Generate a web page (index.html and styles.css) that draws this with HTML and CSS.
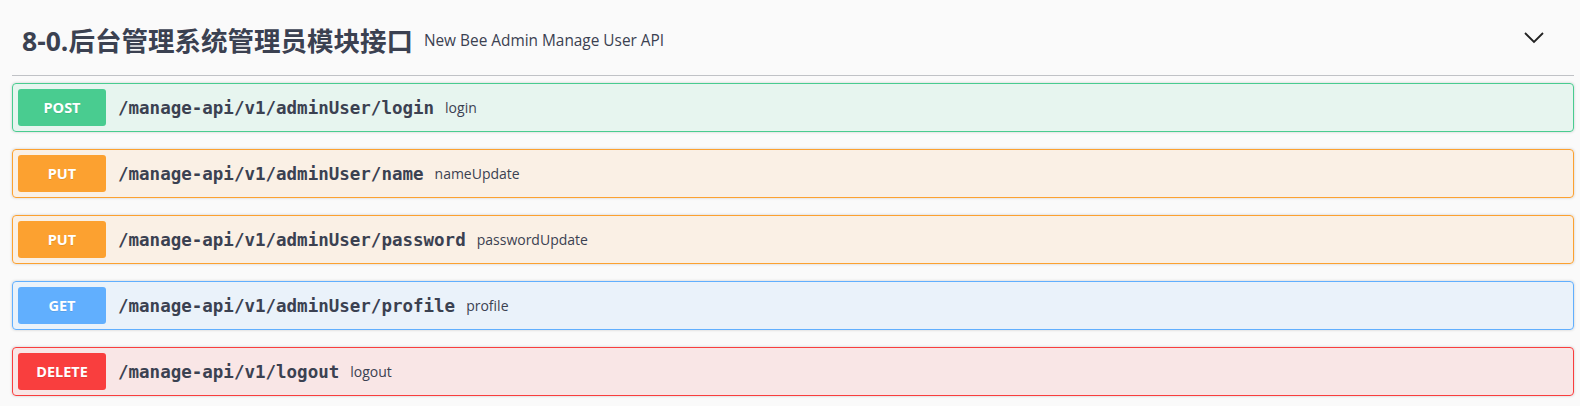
FILE: index.html
```html
<!DOCTYPE html>
<html lang="zh">
<head>
<meta charset="utf-8">
<title>Swagger</title>
<link rel="stylesheet" href="styles.css">
</head>
<body>
<div class="tag-section">
  <div class="tag-header">
    <h4 class="tag-title">8-0.后台管理系统管理员模块接口</h4>
    <span class="tag-desc">New Bee Admin Manage User API</span>
    <span class="spacer"></span>
    <svg class="chevron" width="20" height="12" viewBox="0 0 20 12"><path d="M1 1 L10 10 L19 1" fill="none" stroke="#222" stroke-width="1.8"/></svg>
  </div>
  <div class="ops">
    <div class="op op-post">
      <span class="method">POST</span>
      <span class="path">/manage-api/v1/adminUser/login</span>
      <span class="summary">login</span>
    </div>
    <div class="op op-put">
      <span class="method">PUT</span>
      <span class="path">/manage-api/v1/adminUser/name</span>
      <span class="summary">nameUpdate</span>
    </div>
    <div class="op op-put">
      <span class="method">PUT</span>
      <span class="path">/manage-api/v1/adminUser/password</span>
      <span class="summary">passwordUpdate</span>
    </div>
    <div class="op op-get">
      <span class="method">GET</span>
      <span class="path">/manage-api/v1/adminUser/profile</span>
      <span class="summary">profile</span>
    </div>
    <div class="op op-delete">
      <span class="method">DELETE</span>
      <span class="path">/manage-api/v1/logout</span>
      <span class="summary">logout</span>
    </div>
  </div>
</div>
</body>
</html>
```
FILE: styles.css
```css
html, body {
  margin: 0;
  padding: 0;
  background: #fafafa;
}
body {
  font-family: "Open Sans", "Noto Sans CJK SC", sans-serif;
  color: #3b4151;
}
.tag-section {
  padding: 0 6px 0 12px;
}
.tag-header {
  display: flex;
  align-items: center;
  height: 70px;
  padding-top: 5px;
  padding-left: 10px;
  padding-right: 30px;
  border-bottom: 1px solid rgba(59, 65, 81, 0.3);
}
.tag-title {
  margin: 0;
  margin-top: -2px;
  font-family: "Open Sans", "Noto Sans CJK SC", sans-serif;
  font-size: 26.5px;
  font-weight: 700;
  color: #3b4151;
}
.tag-desc {
  margin-left: 11px;
  font-size: 15.4px;
  color: #3b4151;
}
.spacer {
  flex: 1;
}
.chevron {
  display: block;
  margin-top: -4px;
}
.ops {
  padding-top: 7px;
}
.op {
  display: flex;
  align-items: center;
  height: 37px;
  padding: 5px;
  margin-bottom: 17px;
  border: 1px solid;
  border-radius: 4px;
  box-shadow: 0 0 3px rgba(0, 0, 0, 0.19);
}
.method {
  width: 88px;
  height: 37px;
  flex: none;
  display: flex;
  align-items: center;
  justify-content: center;
  border-radius: 3px;
  color: #fff;
  font-size: 14.5px;
  font-weight: 700;
  text-shadow: 0 1px 0 rgba(0, 0, 0, 0.1);
}
.path {
  margin-left: 12px;
  font-family: "DejaVu Sans Mono", monospace;
  font-size: 17.5px;
  font-weight: 700;
  color: #3b4151;
}
.summary {
  margin-left: 11px;
  font-size: 14px;
  color: #3b4151;
}
.op-post { background: rgba(73, 204, 144, 0.1); border-color: #49cc90; }
.op-post .method { background: #49cc90; }
.op-put { background: rgba(252, 161, 48, 0.1); border-color: #fca130; }
.op-put .method { background: #fca130; }
.op-get { background: rgba(97, 175, 254, 0.1); border-color: #61affe; }
.op-get .method { background: #61affe; }
.op-delete { background: rgba(249, 62, 62, 0.1); border-color: #f93e3e; }
.op-delete .method { background: #f93e3e; }
```
